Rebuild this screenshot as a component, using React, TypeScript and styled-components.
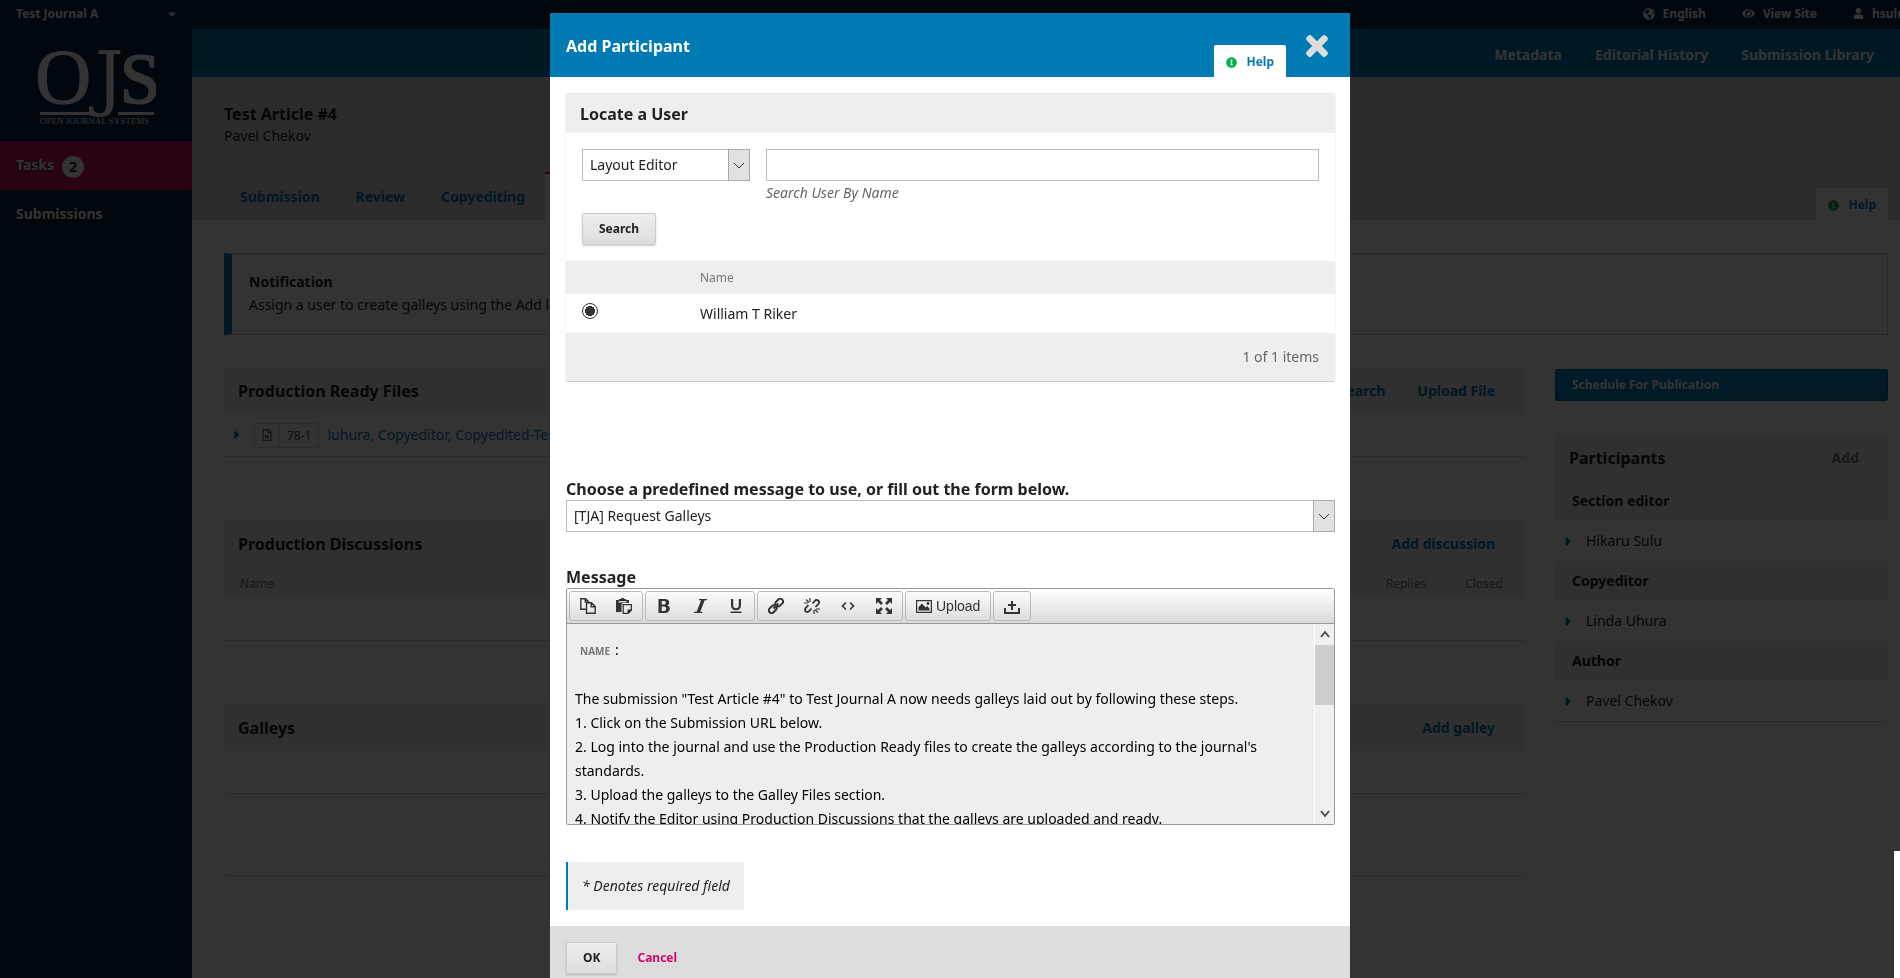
import React from "react";
import styled, { createGlobalStyle, css } from "styled-components";
import {
  FaCaretDown,
  FaCaretRight,
  FaEye,
  FaGlobeAmericas,
  FaInfoCircle,
  FaRegFileWord,
  FaTimes,
  FaUser,
} from "react-icons/fa";

const blue = "#007ab2";
const pink = "#d00a6c";
const navy = "#002c40";

const GlobalStyle = createGlobalStyle`
  *, *::before, *::after { box-sizing: border-box; }
  body {
    margin: 0;
    color: #222;
    background: #fff;
    font: 14px/20px "Noto Sans", sans-serif;
  }
  h1, h2, h3, h4, p, ul { margin: 0; padding: 0; }
  a { color: ${blue}; text-decoration: none; }
  button, input, select { font: inherit; color: inherit; margin: 0; }
  svg { display: block; flex: none; }
`;

/* ---------- Page behind the dialog ---------- */

const Page = styled.div`
  display: flex;
  flex-direction: column;
  min-height: 100vh;
`;

const TopBar = styled.header`
  display: flex;
  align-items: center;
  justify-content: space-between;
  height: 29px;
  padding: 0 0 2px 16px;
  overflow: hidden;
  background: ${navy};
  color: #fff;
  font-size: 12px;
  font-weight: 700;
`;

const JournalMenu = styled.button`
  display: flex;
  align-items: center;
  justify-content: space-between;
  width: 162px;
  padding: 0;
  border: 0;
  background: none;
  color: #fff;
  font-weight: 700;
`;

const SiteLinks = styled.nav`
  display: flex;
  gap: 36px;
  margin-right: -5px;
`;

const SiteLink = styled.a`
  display: flex;
  align-items: center;
  gap: 8px;
  color: #fff;
`;

const Columns = styled.div`
  display: flex;
  flex: 1;
`;

const Sidebar = styled.aside`
  flex: none;
  width: 192px;
  background: ${navy};
`;

const LogoLink = styled.a`
  display: block;
  height: 112px;
  padding: 16px 36px 0;
`;

const SideLink = styled.a<{ $active?: boolean }>`
  display: flex;
  align-items: center;
  gap: 8px;
  height: 49px;
  padding: 0 16px 2px;
  color: #fff;
  font-weight: 700;
  text-shadow: 0 1px 2px #000;
  background: ${(p) => (p.$active ? pink : "transparent")};
`;

const Count = styled.span`
  width: 22px;
  border-radius: 11px;
  margin-top: 4px;
  background: #fff;
  color: #222;
  line-height: 22px;
  text-align: center;
  text-shadow: none;
`;

const Main = styled.main`
  flex: 1;
  min-width: 0;
`;

const ActionBar = styled.nav`
  display: flex;
  align-items: center;
  justify-content: flex-end;
  gap: 33px;
  height: 48px;
  padding: 3px 26px 0 0;
  background: ${blue};
  font-weight: 700;
  a { color: #fff; }
`;

const ArticleHead = styled.section`
  display: flex;
  flex-direction: column;
  justify-content: space-between;
  height: 143px;
  padding: 25px 12px 0 32px;
  background: #ddd;
`;

const Title = styled.h1`
  font-size: 16px;
  line-height: 24px;
`;

const TabRow = styled.nav`
  display: flex;
  align-items: flex-end;
`;

const Tab = styled.a<{ $active?: boolean }>`
  height: 48px;
  padding: 0 20px 0 16px;
  border-top: 2px solid transparent;
  line-height: 46px;
  font-weight: 700;
  ${(p) =>
    p.$active &&
    css`
      border-color: ${pink};
      background: #fff;
      color: #222;
    `}
`;

const HelpTab = styled.a`
  display: flex;
  align-items: center;
  gap: 9px;
  height: 32px;
  margin-left: auto;
  padding: 2px 12px 0;
  border-radius: 2px 2px 0 0;
  background: #fff;
  font-size: 12px;
  font-weight: 700;
  svg { color: #00b24e; }
`;

const Content = styled.div`
  padding: 33px 12px 0 32px;
`;

const Notice = styled.section`
  padding: 16px 16px 18px 17px;
  border: 1px solid #ccc;
  border-left: 8px solid ${blue};
  line-height: 23px;
  h4 { font-size: 14px; }
`;

const ContentGrid = styled.div`
  display: grid;
  grid-template-columns: minmax(0, 1fr) 333px;
  gap: 31px;
  margin-top: 32px;
`;

const Stack = styled.div`
  display: flex;
  flex-direction: column;
  gap: 64px;
`;

const Panel = styled.section`
  border-radius: 2px;
  background: #fff;
  box-shadow: 0 0 1px rgba(0, 0, 0, 0.2), 0 1px 1px rgba(0, 0, 0, 0.2);
`;

const PanelHead = styled.div`
  display: flex;
  align-items: center;
  gap: 32px;
  min-height: 47px;
  padding: 0 29px 0 14px;
  background: #eee;
  font-weight: 700;
  h3, h4 {
    margin-right: auto;
    font-size: 16px;
  }
`;

const PanelBody = styled.div`
  display: flex;
  align-items: center;
  height: 42px;
  padding: 0 6px;
`;

const PlainPanel = styled(Panel)`
  height: 18px;
`;

const MutedHead = styled.div`
  display: flex;
  gap: 39px;
  padding: 7px 21px 4px 16px;
  background: #eee;
  color: #777;
  font-size: 12px;
  span:first-child { margin-right: auto; }
`;

const FileTag = styled.span`
  display: flex;
  align-items: center;
  height: 25px;
  margin: 0 8px 0 10px;
  border: 1px solid #ddd;
  color: #555;
  font-size: 12px;
  span {
    padding: 0 7px;
    border-left: 1px solid #ddd;
    line-height: 23px;
  }
  svg { margin: 0 6px; }
`;

const ScheduleButton = styled.button`
  display: block;
  width: 100%;
  height: 32px;
  margin: 2px 0 33px;
  padding: 0 16px;
  border: 1px solid #00649a;
  border-radius: 2px;
  background: linear-gradient(#008fd0, ${blue});
  color: #fff;
  font-size: 12px;
  font-weight: 700;
  text-align: left;
`;

const AddLink = styled.a`
  color: #777;
`;

const RoleName = styled.h4`
  padding: 0 17px;
  background: #eee;
  font-size: 14px;
  line-height: 40px;
`;

const Person = styled.p`
  display: flex;
  align-items: center;
  gap: 10px;
  height: 40px;
  padding: 0 6px;
  svg { color: ${blue}; }
`;

/* ---------- Dialog ---------- */

const Backdrop = styled.div`
  position: fixed;
  inset: 0;
  padding-top: 13px;
  overflow: hidden;
  background: rgba(0, 0, 0, 0.8);
`;

const PageEdge = styled.div`
  position: fixed;
  right: 0;
  bottom: 0;
  width: 6px;
  height: 127px;
  background: #fff;
`;

const Dialog = styled.section`
  max-width: 800px;
  margin: 0 auto;
  border-radius: 3px 3px 0 0;
  background: #fff;
  overflow: hidden;
`;

const DialogHead = styled.header`
  display: flex;
  align-items: center;
  gap: 16px;
  height: 64px;
  padding: 2px 18px 0 16px;
  background: ${blue};
  color: #fff;
  h2 {
    font-size: 16px;
  }
  ${HelpTab} { align-self: flex-end; }
`;

const CloseButton = styled.button`
  padding: 0;
  border: 0;
  background: none;
  color: #ddd;
  svg {
    stroke-width: 20px;
    stroke-linejoin: round;
  }
`;

const DialogBody = styled.form`
  padding: 16px 15px 16px 16px;
`;

const LocatePanel = styled(Panel)`
  ${PanelHead} { min-height: 40px; padding-top: 1px; }
`;

const SearchArea = styled.div`
  display: grid;
  grid-template-columns: 168px minmax(0, 1fr);
  column-gap: 16px;
  padding: 16px;
`;

const Field = styled.div`
  label {
    display: block;
    color: #666;
    font-style: italic;
    line-height: 24px;
  }
`;

const inputBox = css`
  width: 100%;
  height: 32px;
  padding: 0 8px;
  border: 1px solid #bbb;
  border-radius: 0;
  background: #fff;
`;

const TextInput = styled.input`
  ${inputBox}
  display: block;
`;

const SelectBox = styled.div`
  display: grid;
  > * { grid-area: 1 / 1; }
`;

const Select = styled.select`
  ${inputBox}
  padding: 0 7px;
  appearance: none;
`;

const SelectArrow = styled.span`
  display: grid;
  place-items: center;
  justify-self: end;
  width: 22px;
  height: 32px;
  border: 1px solid #aaa;
  background: #e1e1e1;
  pointer-events: none;
`;

const Button = styled.button`
  height: 32px;
  padding: 0 16px;
  border: 1px solid #ccc;
  border-radius: 2px;
  background: linear-gradient(#eee, #ddd);
  box-shadow: 0 1px 2px rgba(0, 0, 0, 0.2);
  font-size: 12px;
  font-weight: 700;
`;

const SearchButton = styled(Button)`
  margin-top: 8px;
  justify-self: start;
`;

const UserTable = styled.table`
  width: 100%;
  border-collapse: collapse;
  th, td { padding: 0; text-align: left; }
  th {
    height: 33px;
    background: #eee;
    color: #777;
    font-size: 12px;
    font-weight: 400;
  }
  td { height: 39px; }
  th:first-child, td:first-child { width: 134px; padding-left: 16px; }
`;

const Radio = styled.input`
  display: block;
  appearance: none;
  width: 16px;
  height: 16px;
  margin-bottom: 5px;
  border: 1px solid #333;
  border-radius: 50%;
  background: radial-gradient(circle, #333 5px, #fff 5px);
`;

const ItemCount = styled.p`
  padding: 14px 16px;
  background: #eee;
  color: #666;
  text-align: right;
`;

const TemplateField = styled.div`
  margin-top: 96px;
`;

const MessageField = styled.div`
  margin-top: 33px;
`;

const FieldLabel = styled.label`
  display: block;
  padding-top: 1px;
  font-size: 16px;
  font-weight: 700;
  line-height: 22px;
`;

const Editor = styled.div`
  border: 1px solid #999;
  border-radius: 2px;
`;

const Toolbar = styled.div`
  display: flex;
  gap: 2px;
  padding: 2px;
  border-bottom: 1px solid #999;
  background: linear-gradient(#fff, #d9d9d9);
`;

const ToolGroup = styled.div`
  display: flex;
  border: 1px solid #bbb;
  border-radius: 3px;
  background: linear-gradient(#fcfcfc, #ddd);
`;

const Tool = styled.button`
  display: flex;
  align-items: center;
  justify-content: center;
  gap: 4px;
  min-width: 36px;
  height: 28px;
  padding: 0 10px;
  border: 0;
  background: none;
  color: #333;
  font: 14px/20px "Liberation Sans", Arial, sans-serif;
`;

const EditorArea = styled.div`
  display: flex;
  height: 200px;
  background: #eee;
`;

const EditorText = styled.div`
  flex: 1;
  padding: 14px 8px;
  overflow: hidden;
  color: #000;
  line-height: 24px;
  outline: none;
`;

const Placeholder = styled.span`
  padding: 0 5px;
  color: #777;
  font-size: 10px;
  font-weight: 700;
`;

const ScrollTrack = styled.div`
  display: flex;
  flex-direction: column;
  align-items: center;
  justify-content: space-between;
  width: 20px;
  padding: 3px 0;
  border-left: 1px solid #fff;
  background: #f0f0f0;
`;

const ScrollTop = styled.div`
  display: flex;
  flex-direction: column;
  align-items: center;
  gap: 4px;
  width: 100%;
`;

const ScrollThumb = styled.div`
  width: 100%;
  height: 60px;
  background: #cdcdcd;
`;

const RequiredNote = styled.p`
  width: fit-content;
  margin-top: 37px;
  padding: 14px;
  border-left: 2px solid ${blue};
  background: #eee;
  font-style: italic;
`;

const DialogFoot = styled.footer`
  display: flex;
  align-items: center;
  gap: 20px;
  padding: 16px;
  background: #ddd;
`;

const CancelLink = styled.a`
  color: ${pink};
  font-size: 12px;
  font-weight: 700;
`;

/* ---------- Drawings ---------- */

const Logo = () => (
  <svg width="120" height="84" viewBox="0 0 120 84" fill="#fff" role="img" aria-label="Open Journal Systems">
    <g stroke="#fff">
      <text x="-1" y="58" fontFamily="Liberation Serif, serif" fontSize="78">O</text>
      <text x="59" y="57" fontFamily="DejaVu Serif, serif" fontSize="71" strokeWidth="0">J</text>
      <text x="84" y="58" fontFamily="Liberation Serif, serif" fontSize="72" strokeWidth="2">S</text>
    </g>
    <path d="M4 67h53v3H4zM82 67h36v3H82z" />
    <text x="4" y="79" fontFamily="Liberation Serif, serif" fontSize="9">OPEN JOURNAL SYSTEMS</text>
  </svg>
);

const SelectChevron = () => (
  <svg width="12" height="12" viewBox="0 0 12 12" fill="none" stroke="#333">
    <path d="M1 4l5 5 5-5" />
  </svg>
);

const ScrollChevron = ({ up }: { up?: boolean }) => (
  <svg width="14" height="14" viewBox="0 0 14 14" fill="none" stroke="#505050" strokeWidth="2">
    <path d={up ? "M3 10l4-5 4 5" : "M3 4l4 5 4-5"} />
  </svg>
);

const toolShapes: Record<string, React.ReactNode> = {
  Copy: (
    <g fill="none" stroke="currentColor" strokeWidth="1.4">
      <path d="M6 11.300H.8V.8h4.800l3 3v1.500M5.300.8v3.300h3.300" />
      <path d="M6.500 4.800h5l3.700 3.700v6.700H6.500zM11.200 4.800v4h4" />
    </g>
  ),
  Paste: (
    <g fill="currentColor">
      <path d="M0 2h3V1h2a1.500 1.500 0 0 1 3 0h2v1h3v3H7L5.500 6.500V14H0zM2.500 3.200v1.300h8V3.200z" fillRule="evenodd" />
      <path d="M6.500 6h9.500v6.500L12.500 16h-6zM7.800 7.300v7.400h3.700V11.500h3.200V7.300z" fillRule="evenodd" />
    </g>
  ),
  Bold: (
    <path
      fill="currentColor"
      fillRule="evenodd"
      d="M2.500 1h6C11.700 1 13.200 2.400 13.200 4.500c0 1.400-.7 2.400-1.900 2.900 1.600.4 2.500 1.500 2.500 3.100 0 2.600-1.800 4.500-5.100 4.500H2.500zm3.200 2v3.500h2.100c1.300 0 2-.6 2-1.800S9.100 3 7.800 3zm0 5.500V13h2.300c1.400 0 2.200-.8 2.200-2.200S9.400 8.500 8 8.500z"
    />
  ),
  Italic: <path fill="currentColor" d="M7 1h8v1.200h-2.300L8.200 13.800h2V15h-8v-1.200h2.400L9.100 2.200H7z" />,
  Underline: (
    <path fill="currentColor" d="M3 1h2.200v6.500c0 1.700 1 2.700 2.800 2.700s2.800-1 2.800-2.700V1H13v6.500c0 3-1.900 4.700-5 4.700S3 10.500 3 7.500zM2.500 13.500h11V15h-11z" />
  ),
  Link: (
    <g fill="none" stroke="currentColor" strokeWidth="2">
      <rect x="7" y="2" width="8.500" height="5.500" rx="2.700" transform="rotate(-45 11 4.700)" />
      <rect x="0.500" y="8.500" width="8.500" height="5.500" rx="2.700" transform="rotate(-45 4.700 11.300)" />
      <path d="M5.500 10.500l5-5" />
    </g>
  ),
  Unlink: (
    <g fill="none" stroke="currentColor">
      <g strokeWidth="1.800">
        <path d="M8.500 5.500l2.400-2.700a2.300 2.300 0 0 1 3.500 3L11.500 9" />
        <path d="M7.500 10.500l-2.400 2.700a2.300 2.300 0 0 1-3.500-3L4.500 7" />
      </g>
      <path strokeWidth="1.200" d="M6 0v4M2 1.500l3 3M0 5h4M10 12v4M11 11.500l3 3M12 11h4" />
    </g>
  ),
  "Source code": (
    <path fill="none" stroke="currentColor" strokeWidth="1.600" d="M6 4.500L2.500 8 6 11.500M10 4.500L13.500 8 10 11.500" />
  ),
  Fullscreen: (
    <path
      fill="currentColor"
      d="M0 0h6L4 2l3 3-2 2-3-3-2 2zM16 0v6l-2-2-3 3-2-2 3-3-2-2zM0 16v-6l2 2 3-3 2 2-3 3 2 2zM16 16h-6l2-2-3-3 2-2 3 3 2-2z"
    />
  ),
  "Upload image": (
    <g fill="currentColor">
      <path fillRule="evenodd" d="M0 2h16v13H0zm1.200 1.200v10.600h13.600V3.200z" />
      <path d="M2.500 12.500V9L6 5.500l3.500 4L11 8l2.500 2.500v2z" />
      <circle cx="12" cy="5.500" r="1.400" />
    </g>
  ),
  "Insert content": (
    <path fill="currentColor" d="M0 10h2v4h12v-4h2v6H0zM7 3h2v3h3v2H9v4H7V8H4V6h3z" />
  ),
};

const toolGroups = [
  ["Copy", "Paste"],
  ["Bold", "Italic", "Underline"],
  ["Link", "Unlink", "Source code", "Fullscreen"],
  ["Upload image"],
  ["Insert content"],
];

const participants = [
  { role: "Section editor", name: "Hikaru Sulu" },
  { role: "Copyeditor", name: "Linda Uhura" },
  { role: "Author", name: "Pavel Chekov" },
];

const BackgroundPage = () => (
  <Page>
    <TopBar>
      <JournalMenu type="button">
        Test Journal A <FaCaretDown size={12} />
      </JournalMenu>
      <SiteLinks>
        <SiteLink href="#"><FaGlobeAmericas size={12} />English</SiteLink>
        <SiteLink href="#"><FaEye size={13} />View Site</SiteLink>
        <SiteLink href="#"><FaUser size={11} />hsulu</SiteLink>
      </SiteLinks>
    </TopBar>
    <Columns>
      <Sidebar>
        <LogoLink href="#"><Logo /></LogoLink>
        <SideLink href="#" $active>Tasks <Count>2</Count></SideLink>
        <SideLink href="#">Submissions</SideLink>
      </Sidebar>
      <Main>
        <ActionBar>
          <a href="#">Metadata</a>
          <a href="#">Editorial History</a>
          <a href="#">Submission Library</a>
        </ActionBar>
        <ArticleHead>
          <div>
            <Title>Test Article #4</Title>
            <p>Pavel Chekov</p>
          </div>
          <TabRow>
            <Tab href="#">Submission</Tab>
            <Tab href="#">Review</Tab>
            <Tab href="#">Copyediting</Tab>
            <Tab href="#" $active>Production</Tab>
            <HelpTab href="#"><FaInfoCircle size={11} />Help</HelpTab>
          </TabRow>
        </ArticleHead>
        <Content>
          <Notice>
            <h4>Notification</h4>
            <p>Assign a user to create galleys using the Add link in the Participants list.</p>
          </Notice>
          <ContentGrid>
            <Stack>
              <Panel>
                <PanelHead>
                  <h3>Production Ready Files</h3>
                  <a href="#">Search</a>
                  <a href="#">Upload File</a>
                </PanelHead>
                <PanelBody>
                  <FaCaretRight size={14} color={blue} />
                  <FileTag><FaRegFileWord size={12} /><span>78-1</span></FileTag>
                  <a href="#">luhura, Copyeditor, Copyedited-Test.docx</a>
                </PanelBody>
              </Panel>
              <Panel>
                <PanelHead>
                  <h3>Production Discussions</h3>
                  <a href="#">Add discussion</a>
                </PanelHead>
                <MutedHead><span>Name</span><span>Replies</span><span>Closed</span></MutedHead>
                <PanelBody />
              </Panel>
              <Panel>
                <PanelHead>
                  <h3>Galleys</h3>
                  <a href="#">Add galley</a>
                </PanelHead>
                <PanelBody />
              </Panel>
              <PlainPanel />
            </Stack>
            <div>
              <ScheduleButton type="button">Schedule For Publication</ScheduleButton>
              <Panel>
                <PanelHead>
                  <h3>Participants</h3>
                  <AddLink href="#">Add</AddLink>
                </PanelHead>
                {participants.map((p) => (
                  <div key={p.role}>
                    <RoleName>{p.role}</RoleName>
                    <Person><FaCaretRight size={15} />{p.name}</Person>
                  </div>
                ))}
              </Panel>
            </div>
          </ContentGrid>
        </Content>
      </Main>
    </Columns>
  </Page>
);

const MessageEditor = () => (
  <Editor>
    <Toolbar>
      {toolGroups.map((group) => (
        <ToolGroup key={group[0]}>
          {group.map((name) => (
            <Tool key={name} type="button" aria-label={name}>
              <svg width="16" height="16" viewBox="0 0 16 16">{toolShapes[name]}</svg>
              {name === "Upload image" && "Upload"}
            </Tool>
          ))}
        </ToolGroup>
      ))}
    </Toolbar>
    <EditorArea>
      <EditorText role="textbox" aria-labelledby="message-label" contentEditable suppressContentEditableWarning>
        <Placeholder>NAME</Placeholder>:
        <br />
        <br />
        The submission "Test Article #4" to Test Journal A now needs galleys laid out by following these steps.
        <br />
        1. Click on the Submission URL below.
        <br />
        2. Log into the journal and use the Production Ready files to create the galleys according to the journal's
        standards.
        <br />
        3. Upload the galleys to the Galley Files section.
        <br />
        4. Notify the Editor using Production Discussions that the galleys are uploaded and ready.
      </EditorText>
      <ScrollTrack>
        <ScrollTop>
          <ScrollChevron up />
          <ScrollThumb />
        </ScrollTop>
        <ScrollChevron />
      </ScrollTrack>
    </EditorArea>
  </Editor>
);

const AddParticipant = () => (
  <Dialog role="dialog" aria-label="Add Participant">
    <DialogHead>
      <h2>Add Participant</h2>
      <HelpTab href="#"><FaInfoCircle size={11} />Help</HelpTab>
      <CloseButton type="button" aria-label="Close"><FaTimes size={30} /></CloseButton>
    </DialogHead>
    <DialogBody>
      <LocatePanel>
        <PanelHead><h4>Locate a User</h4></PanelHead>
        <SearchArea>
          <SelectBox>
            <Select aria-label="Role" defaultValue="layout">
              <option value="layout">Layout Editor</option>
            </Select>
            <SelectArrow><SelectChevron /></SelectArrow>
          </SelectBox>
          <Field>
            <TextInput id="user-name" type="text" />
            <label htmlFor="user-name">Search User By Name</label>
          </Field>
          <SearchButton type="button">Search</SearchButton>
        </SearchArea>
        <UserTable>
          <thead>
            <tr><th /><th>Name</th></tr>
          </thead>
          <tbody>
            <tr>
              <td><Radio type="radio" name="user" id="user-riker" defaultChecked /></td>
              <td><label htmlFor="user-riker">William T Riker</label></td>
            </tr>
          </tbody>
        </UserTable>
        <ItemCount>1 of 1 items</ItemCount>
      </LocatePanel>
      <TemplateField>
        <FieldLabel htmlFor="template">Choose a predefined message to use, or fill out the form below.</FieldLabel>
        <SelectBox>
          <Select id="template" defaultValue="galleys">
            <option value="galleys">[TJA] Request Galleys</option>
          </Select>
          <SelectArrow><SelectChevron /></SelectArrow>
        </SelectBox>
      </TemplateField>
      <MessageField>
        <FieldLabel as="div" id="message-label">Message</FieldLabel>
        <MessageEditor />
      </MessageField>
      <RequiredNote>* Denotes required field</RequiredNote>
    </DialogBody>
    <DialogFoot>
      <Button type="submit">OK</Button>
      <CancelLink href="#">Cancel</CancelLink>
    </DialogFoot>
  </Dialog>
);

export default function App() {
  return (
    <>
      <GlobalStyle />
      <BackgroundPage />
      <Backdrop>
        <AddParticipant />
      </Backdrop>
      <PageEdge />
    </>
  );
}
